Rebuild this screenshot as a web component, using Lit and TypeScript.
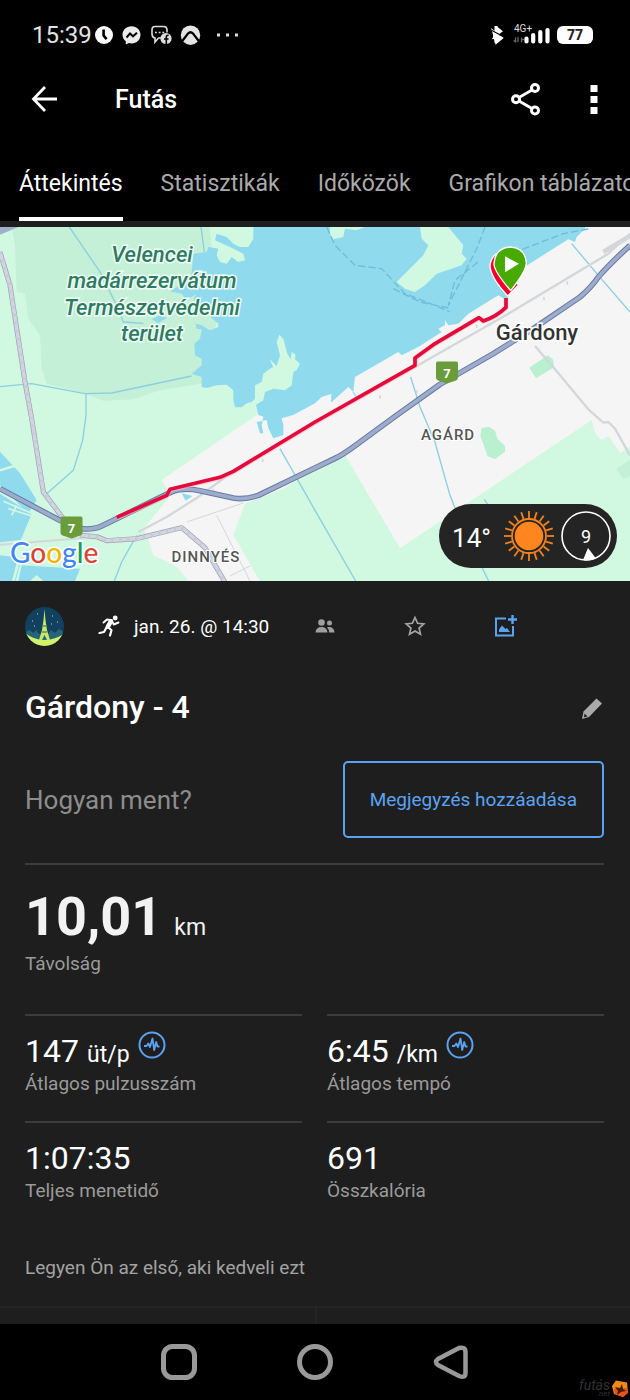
import { LitElement, html, svg, css } from "lit";
import { customElement } from "lit/decorators.js";

const statusIcons = html`
  <svg class="notif" width="106" height="24" viewBox="0 0 106 24" aria-hidden="true">
    <circle cx="9" cy="12" r="9" fill="#fff" />
    <path d="M8.6 6.5v6l3 3.6" fill="none" stroke="#000" stroke-width="2.6" />
    <path d="M36.500 3.200c5.200 0 9 3.700 9 8.600s-3.800 8.600-9 8.600c-1 0-1.800-.1-2.600-.3l-3.100 1.300v-3.200c-2-1.500-3.300-3.700-3.300-6.400 0-4.900 3.800-8.600 9-8.600z" fill="#eaeaea" />
    <path d="M31.500 14.500l3.500-4 3 2.800 4-3.600" fill="none" stroke="#000" stroke-width="2" />
    <g fill="none" stroke="#ddd" stroke-width="1.600">
      <path d="M59.500 3.500h9q3.500 0 3.500 3.500v2.500M66 15h-2.500l-3.500 4v-4q-3-.5-3-4V7q0-3.500 3-3.500" />
    </g>
    <path d="M60 9.500h1.800M63.700 9.500h1.800M67.400 9.500h1.800" stroke="#ddd" stroke-width="1.600" />
    <circle cx="71" cy="15.500" r="5.600" fill="#ddd" />
    <path d="M71.300 21v-7q0-2 2.300-1.800M69 16h4.500" fill="none" stroke="#000" stroke-width="1.600" />
    <circle cx="95.500" cy="12.200" r="9.700" fill="#e4e4e4" />
    <path d="M86.500 19l6.500-8.500q2.500-2.500 5 0l6.500 8.500M92 11.500q3.500-4 7 0" fill="none" stroke="#000" stroke-width="2.200" />
  </svg>`;

const phoneIcons = html`
  <svg width="64" height="28" viewBox="0 0 64 28" aria-hidden="true">
    <path d="M5 5.500l6 5-9.500 7.500M1.500 9l10 8L5 22.500z" fill="#fff" stroke="#fff" stroke-width="1.500" />
    <path d="M5 5v17" stroke="#fff" stroke-width="3" />
    <path d="M1 9.500l11 6M12 11l-4 3" stroke="#000" stroke-width="1.100" />
    <text x="23" y="11" class="net">4G+</text>
    <path d="M24.500 21.500v-5M27 16v5M30.500 21.500v-5M22.500 20h3M30 18.500h3" stroke="#666" stroke-width="1.300" />
    <path d="M35.500 17.500v3M42.200 14v6.500M49.300 11v9.500M56.500 9v11.500" stroke="#fff" stroke-width="4.200" stroke-linecap="round" />
  </svg>`;

const pulse = html`
  <svg class="pulse" width="28" height="28" viewBox="0 0 28 28" aria-hidden="true">
    <circle cx="14" cy="14" r="12.500" fill="none" stroke="#5ba3f2" stroke-width="2" />
    <path d="M6 15h2.500l1.800-2.500 1.700 3.500 2.500-8.500 1.700 11.500 2-8 1.300 4.500h2" fill="none" stroke="#5ba3f2" stroke-width="1.800" stroke-linejoin="round" />
  </svg>`;

const shield = (x: number, y: number) => svg`
  <g transform="translate(${x} ${y})">
    <path d="M-9.500-11.500h19q1.500 0 1.500 2v14q0 2-2 3l-6 2-3 1-3-1-6-2q-2-1-2-3v-14q0-2 1.500-2z" fill="#6a9c3c" />
    <text y="5" class="road">7</text>
  </g>`;

const sunRays = Array.from({ length: 20 }, (_, i) => svg`
  <path d="M0-18V-25" transform="rotate(${i * 18})" stroke="#f58220" stroke-width="1.800" />`);

const mapArt = html`
  <svg class="map" viewBox="0 0 630 354" preserveAspectRatio="xMidYMid slice" role="img" aria-label="Térkép">
    <rect width="630" height="354" fill="#d1f8e1" />
    <g transform="scale(.33333) translate(0 -15)" fill="none" stroke-linejoin="round">
      <path fill="#c3f0d6" d="M35 15L45 70 50 210 75 215 85 290 120 340 125 440 140 485 250 512 310 536 400 532 480 505 610 484 650 300 630 15z" />
      <path fill="#f5f5f5" d="M770 579L485 774 500 800 505 830 430 920 440 935 460 1000 530 1035 565 1077 780 1077 700 940 735 845 850 800 945 740 1035 699 1200 979 1775 594 1785 634 1805 654 1825 642 1860 692 1890 674V15H1700L1300 200 900 500z" />
      <path fill="#90daee" d="M760 15V50L745 75 720 75 700 65 680 45 650 35 645 55 690 75 730 95 735 115 715 120 695 105 680 125 660 120 650 100 655 80 625 75 620 90 580 95 575 150 560 180 540 190 510 208 545 215 560 235 590 215 580 230 605 265 625 280 655 305 655 315 630 325 605 310 587 305 590 320 605 322 600 350 583 365 585 400 605 410 605 430 575 455 605 465 605 495 620 498 650 490 680 488 700 505 700 534 705 556 725 556 740 544 755 540 765 530 765 490 785 480 790 455 810 440 820 435 808 410 830 432 840 400 830 360 838 338 850 350 862 395 872 412 875 390 887 398 885 412 900 425 890 445 880 450 875 490 855 505 820 500 795 510 790 535 768 548 775 579 790 584 785 609 790 634 780 634 770 600 800 594 805 619 820 649 850 639 850 609 845 589 880 579 945 544 965 525 995 515 995 540 1045 495 1060 510 1065 465 1195 390 1205 400 1255 375 1325 330 1315 320 1335 310 1335 295 1345 310 1375 305 1405 275 1495 220 1520 235 1565 140 1705 52 1725 60 1730 45 1755 20 1757 15z" />
      <path fill="#90daee" d="M455 292l25-12 20 8-25 16zM0 689l60 65 50 80-25 40L0 790zM0 815l95 60-35 85-60 10zM0 1000l65 8-18 69H0zM65 1030l175 10-15 37H130l-20-18-20 18H55z" />
      <path fill="#d1f8e1" d="M1260 15L1265 50 1285 70 1270 100 1190 180 1215 200 1245 210 1275 190 1310 155 1385 130 1400 110 1385 95 1390 70 1345 15zM990 15h105l-25 10-35-5-5 25-30 7-10-17z" />
      <path fill="#b9f0cf" d="M1445 618l22-4 18 12 8 25 22 20v18l-30 22-22-8-14-40-8-20zM1588 437l55-37 15 10 5 25-55 34z" />
      <path fill="#c3f0d6" d="M1848 742l42-28v48l-20 8z" />
      <g stroke="#a5dfe6" stroke-width="8">
        <path d="M0 745l60-18M110 834l30-12M130 820L80 925 40 1077M0 965l180-20" stroke="#d1f8e1" />
        <path d="M10 838l90 38M25 860l80 25M50 850l-15 30" stroke="#d1f8e1" stroke-width="5" />
      </g>
      <g stroke="#8bcfe0" stroke-width="4">
        <path d="M208 15L300 150 350 250 370 300 430 304M603 15l10 75M0 494l95-9 160 30 80-2L575 462M258 515v65l-10 75-28 90-80 70M410 940l-45 80-22 57M840 680l105 185M945 865l122 212M1232 465l28 90 45 105 25 90 20 70 40 100 82 170M1715 65l80 95 95 110M1453 832l20 30" />
        <path d="M980 15l25 55 60 60 80 10 70 75 90 35 45 20M1455 15l-25 65-85 170 20-75 75-60M1180 200l80 40 85 18M1480 115l210-80 80-15" stroke="#6fbdd5" stroke-dasharray="22 9" />
        <path d="M995 540l5-70M1060 510l12 22" stroke="#90daee" />
      </g>
      <g stroke="#d3d7da">
        <path d="M1245 435l280-160 300-180 65-60M700 748l-110 80-90 57-85 45" stroke-width="7" />
        <path d="M250 948L0 968" stroke-width="6" />
        <path d="M1605 372l60 70 100 120 45 40 15-2 20 20 45 80" stroke-width="7" />
        <path d="M560 900l170-57M650 880l100 197M690 1062l60-30" stroke-width="3" />
        <path d="M1250 410v14M1430 318v-10M1348 372v10M1632 225v10M1702 178v10M1250 505v10M1140 520v10M640 800v10M788 710v10" stroke-width="5" />
        <path d="M1810 90l80-48" stroke-width="14" />
      </g>
      <g>
        <path d="M0 90L30 190 75 480 95 590 130 810 190 890M240 940l50 4 30 12 90-6 135-33 70 60 75 130" stroke="#9a9db0" stroke-width="15" />
        <path d="M0 90L30 190 75 480 95 590 130 810 190 890M240 940l50 4 30 12 90-6 135-33 70 60 75 130" stroke="#d2d4e0" stroke-width="11" />
        <path d="M0 90L30 190 75 480 95 590 130 810 190 890M240 940l50 4 30 12 90-6 135-33 70 60 75 130" stroke="#c5c8d6" stroke-width="13" stroke-dasharray="6 18" />
      </g>
      <path fill="#9fb0c9" d="M0 15h55L0 38z" />
      <path d="M0 800L185 898M240 920q40 4 65-8L510 812q35-17 90-6l100 22q35 6 75-8L945 738 1005 709q25-12 60-38L1190 580 1320 487 1480 395 1600 320 1740 225Q1775 195 1795 165 1830 125 1890 70" stroke="#6578a2" stroke-width="17" />
      <path d="M0 800L185 898M240 920q40 4 65-8L510 812q35-17 90-6l100 22q35 6 75-8L945 738 1005 709q25-12 60-38L1190 580 1320 487 1480 395 1600 320 1740 225Q1775 195 1795 165 1830 125 1890 70" stroke="#9daccb" stroke-width="11" />
      <path d="M545 814l12 22 20-14z" fill="#90daee" />
      <path d="M350 888L500 822 510 804 660 768 700 750 945 602 1245 432V410L1300 370 1437 289 1450 298Q1490 285 1518 258V228" stroke="#f8b5c0" stroke-width="14" opacity=".6" />
      <path d="M350 886L500 820 510 802 660 766 700 748 945 600 1245 430V408L1300 368 1437 287 1450 297Q1490 283 1518 256V228" stroke="#e40b3c" stroke-width="11" />
      <path d="M1523 222Q1470 165 1470 130 1475 95 1510 85L1555 190z" fill="#f5002c" stroke="#fff" stroke-width="4" />
      <path d="M1532 206Q1480 145 1482 124 1486 77 1532 75 1577 79 1579 124 1577 150 1532 206z" fill="#48aa00" stroke="#fff" stroke-width="4" />
      <path d="M1515 103l42 22-42 26z" fill="#fff" />
    </g>
    ${shield(447, 146)}
    ${shield(71.5, 301)}
    <g class="park">
      <text x="152" y="35">Velencei</text>
      <text x="152" y="61">madárrezervátum</text>
      <text x="152" y="88">Természetvédelmi</text>
      <text x="152" y="114">terület</text>
    </g>
    <text x="537" y="113" class="town">Gárdony</text>
    <text x="448" y="213" class="village">AGÁRD</text>
    <text x="206" y="335" class="village">DINNYÉS</text>
    <text x="10" y="336" class="google"><tspan fill="#4285f4">G</tspan><tspan fill="#db4437">o</tspan><tspan fill="#f4b400">o</tspan><tspan fill="#4285f4">g</tspan><tspan fill="#0f9d58">l</tspan><tspan fill="#db4437">e</tspan></text>
  </svg>`;

@customElement("stat-cell")
class StatCell extends LitElement {
  static properties = {
    value: { type: String },
    unit: { type: String },
    label: { type: String },
    badge: { type: Boolean },
  };
  declare value: string;
  declare unit: string;
  declare label: string;
  declare badge: boolean;

  static styles = css`
    :host { display: block; box-sizing: border-box; height: 107px; padding-top: 15px; border-top: 2px solid #3c3c3c; }
    .line { display: flex; align-items: baseline; gap: 8px; height: 41px; line-height: 40px; color: #fff; }
    .value { font-size: 32px; }
    .unit { font-size: 23px; }
    .pulse { display: block; flex: none; align-self: flex-start; }
    .label { font-size: 19px; line-height: 24px; color: #9b9b9b; }
  `;

  render() {
    return html`
      <div class="line">
        <span class="value">${this.value}</span>
        ${this.unit ? html`<span class="unit">${this.unit}</span>` : ""}
        ${this.badge ? pulse : ""}
      </div>
      <div class="label">${this.label}</div>`;
  }
}

@customElement("app-root")
class AppRoot extends LitElement {
  static styles = css`
    :host { display: flex; flex-direction: column; min-height: 100vh; position: relative; overflow: hidden; background: #1e1e1e; color: #fff; font-family: Roboto, sans-serif; }
    * { box-sizing: border-box; }
    button { padding: 0; border: 0; background: none; color: inherit; font: inherit; display: flex; align-items: center; justify-content: center; cursor: pointer; }
    svg { display: block; flex: none; }
    h1, h2, p { margin: 0; font-weight: 400; }
    .top { background: #000; }
    .status { display: flex; align-items: center; height: 70px; padding: 0 37px 0 32px; }
    .time { font-size: 24px; color: #e4e4e4; margin-right: 3px; }
    .dots { margin-left: 16px; }
    .phone { display: flex; align-items: center; gap: 2px; margin-left: auto; }
    .net { font: 10px Roboto, sans-serif; fill: #ddd; }
    .battery { width: 36px; height: 18px; border-radius: 6px; background: #fff; color: #222; font-size: 14px; line-height: 18px; font-weight: 800; text-align: center; }
    .bar { display: flex; align-items: center; height: 60px; padding: 0 24px 2px 30px; }
    .bar h1 { margin-left: 55px; font-size: 25px; font-weight: 500; flex: 1; }
    .more { margin-left: 40px; width: 24px; }
    .tabs { display: flex; gap: 38px; height: 91px; padding: 16px 0 0 19px; overflow: hidden; }
    .tab { flex: none; height: 75px; padding-top: 3px; font-size: 23px; line-height: 70px; color: #aaa; text-decoration: none; white-space: nowrap; }
    .active { color: #fff; border-bottom: 4px solid #fff; }
    .hero { position: relative; height: 360px; padding-top: 6px; }
    .map { width: 100%; height: 354px; }
    .park text { font: italic 500 22px Roboto, sans-serif; fill: #2f7a63; stroke: #effcf5; stroke-width: 3px; paint-order: stroke; text-anchor: middle; }
    .town { font: 500 22px Roboto, sans-serif; fill: #333; stroke: #fff; stroke-width: 3px; paint-order: stroke; text-anchor: middle; }
    .village { font: 500 15px Roboto, sans-serif; letter-spacing: 1px; fill: #555; stroke: #fff; stroke-width: 2px; paint-order: stroke; text-anchor: middle; }
    .google { font: 500 28px Lato, sans-serif; stroke: #fff; stroke-width: 3px; paint-order: stroke; }
    .road { font: 700 13px Roboto, sans-serif; fill: #fff; text-anchor: middle; }
    .weather { position: absolute; right: 13px; bottom: 13px; display: flex; align-items: center; gap: 7px; height: 64px; padding: 0 6px 0 13px; border-radius: 32px; background: #242424; }
    .temp { padding-top: 3px; font-size: 26px; margin-right: 6px; }
    .wind { font: 18px Roboto, sans-serif; fill: #fff; text-anchor: middle; }
    .content { flex: 1; padding: 0 26px 0 25px; }
    .meta { display: flex; align-items: center; height: 90px; }
    .runner { margin: 0 14px 0 34px; }
    .date { padding-top: 2px; font-size: 19px; line-height: 24px; }
    .actions { display: flex; margin-left: 11px; }
    .action { width: 90px; height: 44px; }
    .title { display: flex; align-items: center; justify-content: space-between; height: 72px; }
    .title h2 { font-size: 32px; font-weight: 500; line-height: 40px; }
    .pencil { padding-top: 4px; }
    .note { display: flex; align-items: center; justify-content: space-between; padding: 18px 0 25px; }
    .ask { font-size: 26px; line-height: 32px; color: #8d8d8d; }
    .add { height: 77px; padding: 0 25px; border: 2px solid #5ba3f2; border-radius: 5px; color: #5ba3f2; font-size: 19px; }
    .distance { height: 151px; padding-top: 18px; border-top: 2px solid #3c3c3c; }
    .big { display: flex; align-items: baseline; gap: 12px; height: 69px; line-height: 68px; font-size: 54px; font-weight: 700; color: #f2f2f2; }
    .big .km { font-size: 23px; font-weight: 400; }
    .label { font-size: 19px; line-height: 24px; color: #9b9b9b; }
    .grid { display: grid; grid-template-columns: 1fr 1fr; column-gap: 25px; }
    .like { padding-top: 28px; font-size: 19px; line-height: 24px; color: #a3a3a3; }
    .split { display: grid; grid-template-columns: 1fr 1fr; height: 18px; border-top: 2px solid #242424; }
    .split span + span { border-left: 2px solid #242424; }
    .nav { position: relative; display: flex; justify-content: center; align-items: center; gap: 100px; height: 76px; background: #000; }
    .mark { position: absolute; right: 1px; bottom: 2px; display: flex; align-items: center; gap: 1px; color: #303030; font: italic 14px/10px Roboto, sans-serif; text-align: right; }
    .mark small { display: block; font-size: 8px; line-height: 8px; }
  `;

  render() {
    return html`
      <header class="top">
        <div class="status">
          <span class="time">15:39</span>
          ${statusIcons}
          <svg class="dots" width="22" height="4" viewBox="0 0 22 4" aria-hidden="true"><path d="M0 2h3M9 2h3M18 2h3" stroke="#ddd" stroke-width="3" /></svg>
          <div class="phone">${phoneIcons}<span class="battery">77</span></div>
        </div>
        <div class="bar">
          <button aria-label="Vissza"><svg width="30" height="30" viewBox="0 0 30 30"><path d="M27 15H4M15 3L3.500 15 15 27" fill="none" stroke="#fff" stroke-width="2.800" /></svg></button>
          <h1>Futás</h1>
          <button aria-label="Megosztás"><svg width="32" height="34" viewBox="0 0 32 34" fill="none" stroke="#fff" stroke-width="3"><path d="M9 15.500l13-7.500M9 19l13 7.500" stroke-width="2.800" /><circle cx="6" cy="17.200" r="3.500" fill="#000" /><circle cx="25" cy="6" r="3.500" fill="#000" /><circle cx="25" cy="28.500" r="3.500" fill="#000" /></svg></button>
          <button class="more" aria-label="Továbbiak"><svg width="8" height="30" viewBox="0 0 8 30"><path d="M.5 1h7v7h-7zM.5 12h7v7h-7zM.5 23h7v7h-7z" fill="#fff" /></svg></button>
        </div>
        <nav class="tabs">
          <a class="tab active" href="#attekintes">Áttekintés</a>
          <a class="tab" href="#statisztikak">Statisztikák</a>
          <a class="tab" href="#idokozok">Időközök</a>
          <a class="tab" href="#grafikon">Grafikon táblázatok</a>
        </nav>
      </header>
      <section class="hero">
        ${mapArt}
        <div class="weather">
          <span class="temp">14°</span>
          <svg width="50" height="50" viewBox="-25 -25 50 50" aria-hidden="true">${sunRays}<circle r="17" fill="none" stroke="#f58220" stroke-width="1.800" /><circle r="14.300" fill="#ff851f" /></svg>
          <svg width="50" height="50" viewBox="0 0 50 50"><circle cx="25" cy="25" r="24" fill="none" stroke="#fff" stroke-width="1.600" /><path d="M27 37l8 10.500q-6 3-13 1.500z" fill="#fff" /><text x="25" y="32" class="wind">9</text></svg>
        </div>
      </section>
      <main class="content">
        <div class="meta">
          <svg width="39" height="39" viewBox="0 0 39 39" role="img" aria-label="Profilkép">
            <clipPath id="face"><circle cx="19.500" cy="19.500" r="19.500" /></clipPath>
            <g clip-path="url(#face)">
              <rect width="39" height="39" fill="#12405f" />
              <path d="M0 25l5-2 3 3 3-3 3 4h9l3-4 4 3 4-4 5 3v8H0z" fill="#27647a" />
              <path d="M0 26q9 7 19 7t20-6v12H0z" fill="#d3f26a" />
              <path d="M19.500 2l1 11 1.500 10 3 10h-3l-2.500-5-2.500 5h-3l3-10 1.500-10z" fill="#c5e86a" />
              <path d="M18 19h3M17 25h5" stroke="#34693f" stroke-width="1.200" />
              <path d="M7 14h1M12 7h1M27 9h1M32 15h1M26 17h1M9 19h1" stroke="#b9d9c0" stroke-width="1.200" />
            </g>
          </svg>
          <svg class="runner" width="22" height="22" viewBox="0 0 22 22" fill="none" stroke="#fff" stroke-linecap="round" stroke-linejoin="round" aria-hidden="true"><circle cx="17.200" cy="3" r="2.400" fill="#fff" stroke="none" /><path d="M5.500 7.500l3.500-3 5 .8M14 6l1.800 3.500 4.700-2" stroke-width="2" /><path d="M12.800 6.500L10 11.500" stroke-width="4.600" /><path d="M10 12l3.500 3.300-1.500 5.200M8.500 12.500l-2.500 4.500-4.500 1" stroke-width="2.200" /></svg>
          <span class="date">jan. 26. @ 14:30</span>
          <div class="actions">
            <button class="action" aria-label="Adatvédelem"><svg width="20" height="16" viewBox="0 0 20 16" fill="#9f9f9f"><circle cx="6.500" cy="4.500" r="3.300" /><circle cx="14.500" cy="5" r="2.500" /><path d="M.5 14.500Q1 9 6.500 9t6 5.500zM13 9q6-.5 6.500 5.500H14q0-3.500-2-5z" /></svg></button>
            <button class="action" aria-label="Kedvenc"><svg width="22" height="22" viewBox="0 0 22 22"><path d="M11 2.500l2.600 5.800 6.200.6-4.700 4.200 1.400 6.200-5.500-3.300-5.500 3.300 1.400-6.200-4.700-4.200 6.200-.6z" fill="none" stroke="#a5a5a5" stroke-width="1.700" /></svg></button>
            <button class="action" aria-label="Kép hozzáadása"><svg width="24" height="24" viewBox="0 0 24 24"><path d="M13 4.500H3v17h17V12" fill="none" stroke="#5ba3f2" stroke-width="2" /><path d="M19.500 1v9M15 5.500h9" stroke="#5ba3f2" stroke-width="2.400" /><path d="M6 18v-2.500l3-4 3.500 3.500 1.500-1 3 4z" fill="#5ba3f2" /></svg></button>
          </div>
        </div>
        <div class="title">
          <h2>Gárdony - 4</h2>
          <button class="pencil" aria-label="Szerkesztés"><svg width="24" height="24" viewBox="0 0 24 24"><path d="M16.500 1.500l5.500 5L9 20l-7 2 1.500-7.500z" fill="#aaa" /><path d="M4.500 16.500l3 3-3.500.8z" fill="#1e1e1e" /></svg></button>
        </div>
        <div class="note">
          <p class="ask">Hogyan ment?</p>
          <button class="add">Megjegyzés hozzáadása</button>
        </div>
        <section class="distance">
          <div class="big"><span>10,01</span><span class="km">km</span></div>
          <div class="label">Távolság</div>
        </section>
        <section class="grid">
          <stat-cell value="147" unit="üt/p" badge label="Átlagos pulzusszám"></stat-cell>
          <stat-cell value="6:45" unit="/km" badge label="Átlagos tempó"></stat-cell>
          <stat-cell value="1:07:35" label="Teljes menetidő"></stat-cell>
          <stat-cell value="691" label="Összkalória"></stat-cell>
        </section>
        <p class="like">Legyen Ön az első, aki kedveli ezt</p>
      </main>
      <div class="split"><span></span><span></span></div>
      <footer class="nav">
        <button aria-label="Legutóbbi"><svg width="36" height="36" viewBox="0 0 36 36"><rect x="2.500" y="2.500" width="31" height="31" rx="9" fill="none" stroke="#999" stroke-width="5" /></svg></button>
        <button aria-label="Kezdőképernyő"><svg width="36" height="36" viewBox="0 0 36 36"><circle cx="18" cy="18" r="15.500" fill="none" stroke="#999" stroke-width="5" /></svg></button>
        <button aria-label="Vissza"><svg width="36" height="36" viewBox="0 0 36 36"><path d="M26 4L5 15q-4 3 0 6L26 32q6.500 2.500 6.500-3V8q0-5.500-6.500-4z" fill="none" stroke="#999" stroke-width="4.500" /></svg></button>
        <div class="mark"><span>futás<small>.net</small></span><svg width="18" height="19" viewBox="0 0 18 19" aria-hidden="true"><path d="M5 1.500l11 2 1 10-5 4.500-9-3L1 7z" fill="#f08a1c" /><path d="M3 10l13-1 1 5-5 4-8-3z" fill="#e4511c" /><path d="M4 8l5 1 2-4 1 5 3 2-5 1-4 3 1-4z" fill="#4a1c08" /></svg></div>
      </footer>`;
  }
}
